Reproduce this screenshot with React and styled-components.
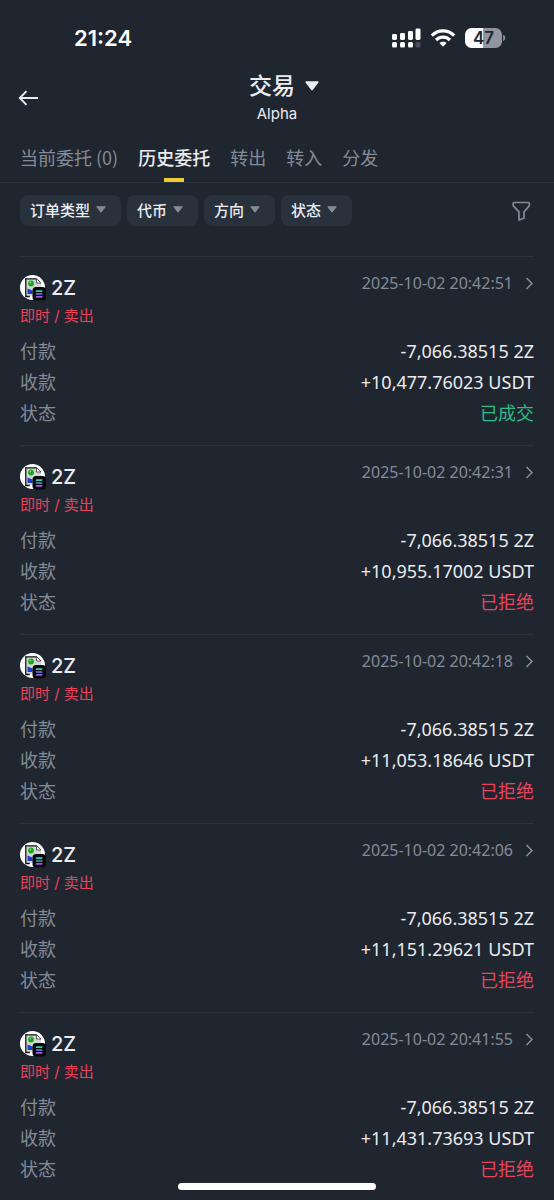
import styled, { createGlobalStyle } from "styled-components";

const GlobalStyle = createGlobalStyle`
  * {
    box-sizing: border-box;
  }
  body {
    margin: 0;
    background: #202630;
    color: #eaecef;
    font-family: Inter, "Noto Sans CJK SC", sans-serif;
  }
  button {
    margin: 0;
    padding: 0;
    border: 0;
    background: none;
    color: inherit;
    font: inherit;
    cursor: pointer;
  }
`;

const Page = styled.div`
  display: flex;
  flex-direction: column;
  height: 100vh;
  overflow: hidden;
`;

const StatusBar = styled.div`
  display: flex;
  align-items: center;
  justify-content: space-between;
  height: 60px;
  padding: 15px 48px 0 74px;
  flex-shrink: 0;
`;

const Clock = styled.span`
  font-size: 22px;
  font-weight: 600;
  color: #fff;
`;

const StatusIcons = styled.div`
  display: flex;
  align-items: center;
  gap: 9px;
`;

const Header = styled.header`
  display: grid;
  grid-template-columns: 40px 1fr 40px;
  align-items: center;
  height: 76px;
  padding: 0 18px;
  flex-shrink: 0;
`;

const BackButton = styled.button`
  display: flex;
  align-items: center;
  height: 40px;
`;

const Titles = styled.div`
  display: flex;
  flex-direction: column;
  align-items: center;
`;

const TitleButton = styled.button`
  display: flex;
  align-items: center;
  gap: 10px;
  padding-left: 14px;
  font-size: 23px;
  font-weight: 500;
  line-height: 32px;
`;

const Subtitle = styled.div`
  font-size: 15px;
  line-height: 24px;
`;

const Tabs = styled.nav`
  display: flex;
  gap: 20px;
  height: 47px;
  padding: 0 20px;
  border-bottom: 1px solid #2b323d;
  flex-shrink: 0;
`;

const Tab = styled.button`
  display: flex;
  flex-direction: column;
  align-items: center;
  justify-content: space-between;
  padding-top: 7px;
  font-family: "Noto Sans CJK SC", sans-serif;
  font-size: 18px;
  line-height: 28px;
  white-space: nowrap;
  color: ${(p) => (p.$active ? "#eaecef" : "#858b96")};
  font-weight: ${(p) => (p.$active ? 500 : 400)};

  &::after {
    content: "";
    width: 20px;
    height: 4px;
    background: ${(p) => (p.$active ? "#f0cb35" : "transparent")};
  }
`;

const Filters = styled.div`
  display: flex;
  align-items: center;
  gap: 6px;
  padding: 12px 23px 30px 20px;
  flex-shrink: 0;
`;

const Chip = styled.button`
  display: flex;
  align-items: center;
  gap: 6px;
  height: 31px;
  padding: 0 15px 2px 10px;
  border-radius: 8px;
  background: #29313d;
  font-size: 15px;
  font-weight: 500;
`;

const FilterButton = styled.button`
  display: flex;
  margin-left: auto;
`;

const Orders = styled.main`
  flex: 1;
  min-height: 0;
  padding: 0 20px;
  overflow-y: auto;
  scrollbar-width: none;
`;

const Order = styled.article`
  padding: 16px 0;
  border-top: 1px solid #2b323d;
`;

const OrderHead = styled.div`
  display: flex;
  align-items: flex-start;
  justify-content: space-between;
`;

const Coin = styled.div`
  display: flex;
  align-items: center;
  gap: 5px;
  font-size: 20px;
  font-weight: 500;
  line-height: 30px;
`;

const DateLink = styled.a`
  display: flex;
  align-items: center;
  gap: 12px;
  font-family: "Noto Sans", sans-serif;
  font-size: 16px;
  line-height: 20px;
  color: #858b96;
  text-decoration: none;
`;

const Side = styled.div`
  margin-bottom: 7px;
  font-size: 15px;
  line-height: 26px;
  color: #e8435b;
`;

const Details = styled.dl`
  margin: 0;
`;

const Row = styled.div`
  display: flex;
  justify-content: space-between;
  font-family: "Noto Sans", "Noto Sans CJK SC", sans-serif;
  font-size: 18px;
  line-height: 31px;
`;

const Label = styled.dt`
  color: #858b96;
`;

const Value = styled.dd`
  margin: 0;
`;

const Status = styled(Value)`
  color: ${(p) => (p.$done ? "#2ebd85" : "#e8435b")};
`;

const HomeIndicator = styled.div`
  position: fixed;
  bottom: 10px;
  left: 50%;
  width: 198px;
  height: 7px;
  margin-left: -99px;
  border-radius: 4px;
  background: #fff;
`;

function SignalIcon() {
  return (
    <svg width="29" height="20" viewBox="0 0 29 20" fill="#fff">
      <rect x="0" y="6" width="5" height="6" rx="1.4" />
      <rect x="8" y="5" width="5" height="7" rx="1.4" />
      <rect x="16" y="3" width="5" height="9" rx="1.4" />
      <rect x="23.5" y="0.5" width="5" height="11.5" rx="1.4" />
      <rect x="0" y="14" width="5" height="5.5" rx="1.6" />
      <rect x="8" y="14" width="5" height="5.5" rx="1.6" />
      <rect x="16" y="14" width="5" height="5.5" rx="1.6" />
      <rect x="23.5" y="14" width="5" height="5.5" rx="1.6" fill="#4a505a" />
    </svg>
  );
}

function WifiIcon() {
  return (
    <svg width="26" height="20" viewBox="0 0 26 20" fill="none" stroke="#fff" strokeWidth="3.2">
      <path d="M1.8 7.6C8 1.3 18 1.3 24.2 7.6" />
      <path d="M6 12c4-3.900 10-3.900 14 0" />
      <path d="M13 18.800l-3.600-3.700c2-1.800 5.200-1.800 7.200 0z" fill="#fff" stroke="none" />
    </svg>
  );
}

function BatteryIcon() {
  return (
    <svg width="41" height="20" viewBox="0 0 41 20">
      <path d="M6.500 0H18v20H6.500A6.500 6.500 0 0 1 0 13.500v-7A6.500 6.500 0 0 1 6.500 0z" fill="#fff" />
      <path d="M18 0h12.500A6.500 6.500 0 0 1 37 6.500v7a6.500 6.500 0 0 1-6.500 6.500H18z" fill="#9295a0" />
      <path d="M38.200 6.800c2.600 1.300 2.600 5.100 0 6.400z" fill="#9295a0" />
      <text x="18.500" y="16.200" textAnchor="middle" fontSize="17" fontWeight="600" fill="#202630">
        47
      </text>
    </svg>
  );
}

function Caret({ size = 10, color = "#858b96" }) {
  return (
    <svg width={size} height={size * 0.7} viewBox="0 0 20 14" fill={color} stroke={color} strokeWidth="2" strokeLinejoin="round">
      <path d="M1.500 1.500h17L10 12.500z" />
    </svg>
  );
}

function BackIcon() {
  return (
    <svg width="21" height="16" viewBox="0 0 21 16" fill="none" stroke="#eaecef" strokeWidth="1.900">
      <path d="M20 8H2M8.500 1.200L1.800 8l6.700 6.800" />
    </svg>
  );
}

function FunnelIcon() {
  return (
    <svg width="19" height="20" viewBox="0 0 19 20" fill="none" stroke="#858b96" strokeWidth="1.700" strokeLinejoin="round">
      <path d="M2.200 1.500h14.200q1 0 1 1v1.600q0 .5-.4 1L12 10.900v6.300L7 19v-8.100L1.600 5.100q-.4-.5-.4-1V2.500q0-1 1-1z" />
    </svg>
  );
}

function ChevronIcon() {
  return (
    <svg width="9" height="13" viewBox="0 0 9 13" fill="none" stroke="#858b96" strokeWidth="1.600">
      <path d="M1.500 1l5.500 5.500L1.500 12" />
    </svg>
  );
}

function CoinIcon() {
  return (
    <svg width="26" height="26" viewBox="0 0 26 26">
      <circle cx="12.500" cy="12.500" r="12.500" fill="#fff" />
      <path d="M6 3.500h10.500l4.500 4.500V21H6z" fill="#d3d5d3" />
      <path d="M5 3.900h11.500M5.800 4v17.500h4" stroke="#111" strokeWidth="1.300" fill="none" />
      <path d="M16.500 3.500V8H21z" fill="#fff" stroke="#333" strokeWidth=".8" />
      <circle cx="11" cy="8.500" r="2.900" fill="#16a51c" />
      <circle cx="10.300" cy="7.600" r="1" fill="#67e06a" />
      <path d="M7.500 13.500l5 2v3.500h-5z" fill="#1b3fd6" />
      <rect x="12.500" y="12" width="13.500" height="13.500" rx="3.500" fill="#07080c" />
      <path d="M16.300 15.300h6.500l-.8 1.600h-6.500z" fill="#35c9b4" />
      <path d="M15.500 18.200H22l.8 1.600h-6.500z" fill="#5f8fe0" />
      <path d="M16.300 21.100h6.500l-.8 1.600h-6.500z" fill="#a15be8" />
    </svg>
  );
}

const tabs = ["当前委托 (0)", "历史委托", "转出", "转入", "分发"];
const filters = ["订单类型", "代币", "方向", "状态"];

const orders = [
  { date: "2025-10-02 20:42:51", received: "+10,477.76023 USDT", done: true },
  { date: "2025-10-02 20:42:31", received: "+10,955.17002 USDT", done: false },
  { date: "2025-10-02 20:42:18", received: "+11,053.18646 USDT", done: false },
  { date: "2025-10-02 20:42:06", received: "+11,151.29621 USDT", done: false },
  { date: "2025-10-02 20:41:55", received: "+11,431.73693 USDT", done: false },
];

function App() {
  return (
    <Page>
      <GlobalStyle />
      <StatusBar>
        <Clock>21:24</Clock>
        <StatusIcons>
          <SignalIcon />
          <WifiIcon />
          <BatteryIcon />
        </StatusIcons>
      </StatusBar>

      <Header>
        <BackButton aria-label="返回">
          <BackIcon />
        </BackButton>
        <Titles>
          <TitleButton>
            交易
            <Caret size={14} color="#eaecef" />
          </TitleButton>
          <Subtitle>Alpha</Subtitle>
        </Titles>
      </Header>

      <Tabs>
        {tabs.map((tab, i) => (
          <Tab key={tab} $active={i === 1}>
            {tab}
          </Tab>
        ))}
      </Tabs>

      <Filters>
        {filters.map((filter) => (
          <Chip key={filter}>
            {filter}
            <Caret />
          </Chip>
        ))}
        <FilterButton aria-label="筛选">
          <FunnelIcon />
        </FilterButton>
      </Filters>

      <Orders>
        {orders.map((order) => (
          <Order key={order.date}>
            <OrderHead>
              <Coin>
                <CoinIcon />
                2Z
              </Coin>
              <DateLink href="#">
                {order.date}
                <ChevronIcon />
              </DateLink>
            </OrderHead>
            <Side>即时 / 卖出</Side>
            <Details>
              <Row>
                <Label>付款</Label>
                <Value>-7,066.38515 2Z</Value>
              </Row>
              <Row>
                <Label>收款</Label>
                <Value>{order.received}</Value>
              </Row>
              <Row>
                <Label>状态</Label>
                <Status $done={order.done}>{order.done ? "已成交" : "已拒绝"}</Status>
              </Row>
            </Details>
          </Order>
        ))}
      </Orders>

      <HomeIndicator />
    </Page>
  );
}

export default App;
